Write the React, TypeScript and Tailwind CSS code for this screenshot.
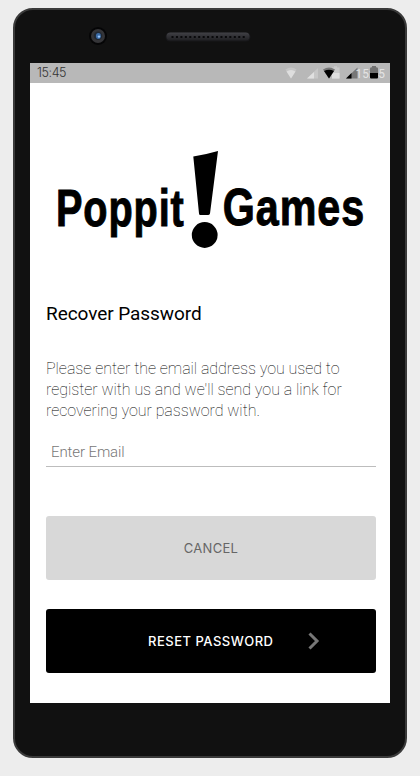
function StatusIcons() {
  return (
    <svg width="110" height="20" viewBox="0 0 110 20" className="block" aria-hidden="true">
      <path d="M5.500 6.500Q11 2.500 16.500 6.500L11 15.500Z" fill="#c7c7c7" />
      <path d="M6.500 8.500Q11 5.500 15.500 8.500L11 15.500Z" fill="#dedede" />
      <path d="M27 15.500H38V5Z" fill="#c7c7c7" />
      <path d="M27 15.500H34V9Z" fill="#e0e0e0" />
      <path d="M52 4.500h2v-1.200h3v1.200h2.500v11H52Z" fill="#c9c9c9" />
      <path d="M52 10h7.500v5.500H52Z" fill="#dedede" />
      <path d="M43 6.500Q49 2.500 55 6.500L49 15.500Z" fill="#777" />
      <path d="M44 8Q49 5.500 54 8L49 15.500Z" fill="#000" />
      <path d="M66 15.500H77.500V4.500Z" fill="#777" />
      <path d="M66 15.500H71.500V10Z" fill="#000" />
      <text x="75.500" y="15" fontFamily="Roboto, sans-serif" fontSize="13" fill="#e4e4e4" textLength="29.500" lengthAdjust="spacingAndGlyphs">15:45</text>
      <path d="M90 5.500q0-1.200 2-1.200V3h4v1.300q2 0 2 1.200V10h-8Z" fill="#707070" />
      <path d="M90 10h8v4.500q0 1-1 1h-6q-1 0-1-1Z" fill="#000" />
    </svg>
  );
}

function Logo() {
  return (
    <svg width="330" height="110" viewBox="46 145 330 110" className="block" role="img" aria-label="Poppit! Games">
      <g fontFamily="'Liberation Sans', Arial, sans-serif" fontWeight="700" fontSize="52.500" letterSpacing="1.200" fill="#000" stroke="#000" strokeWidth="1">
        <text transform="translate(56 225.500) scale(.755 1)">Poppit</text>
        <text transform="translate(222.800 224.700) scale(.786 1)">Games</text>
      </g>
      <path d="M193.300 156.500Q206 154.500 218 151L210 213.500Q209.500 215 208 215H200.500Q199 215 199 213.500Z" />
      <circle cx="204.700" cy="235" r="12.900" />
    </svg>
  );
}

function Speaker() {
  const holes = Array.from({ length: 17 }, (_, i) => i);
  return (
    <svg width="86" height="10" viewBox="0 0 86 10" className="block" aria-hidden="true">
      <defs>
        <linearGradient id="grille" x1="0" y1="0" x2="0" y2="1">
          <stop offset="0" stopColor="#414146" />
          <stop offset="0.500" stopColor="#303034" />
          <stop offset="1" stopColor="#202023" />
        </linearGradient>
      </defs>
      <rect x="0.500" y="0.500" width="85" height="9" rx="4.500" fill="#18181b" />
      <rect x="1.500" y="0.500" width="83" height="8" rx="4" fill="url(#grille)" />
      {holes.map((i) => (
        <rect key={i} x={6.500 + i * 4.450} y="4" width="2" height="2" fill="#09090b" />
      ))}
    </svg>
  );
}

function Camera() {
  return (
    <svg width="18" height="18" viewBox="0 0 18 18" className="block" aria-hidden="true">
      <circle cx="9" cy="9" r="9" fill="#050506" />
      <circle cx="9" cy="9" r="7" fill="#353538" />
      <circle cx="9" cy="8.700" r="4.300" fill="#202833" />
      <ellipse cx="9.400" cy="9" rx="2.500" ry="3" fill="#3c6ca6" />
      <circle cx="10" cy="9.600" r="1.200" fill="#9ac8ff" />
    </svg>
  );
}

export default function App() {
  return (
    <div className="h-[776px] w-[420px] overflow-hidden bg-[#ededed] pt-2 pl-[13px] font-['Roboto',sans-serif]">
      <div className="h-[750px] w-[394px] rounded-[20px] border-2 border-[#3a3a3a] bg-[#111] px-[15px]">
        <header className="flex h-[53px] pt-[17px] pl-[59px]">
          <Camera />
          <div className="mt-[5px] ml-[58px]">
            <Speaker />
          </div>
        </header>
        <main className="h-[640px] w-[360px] bg-white">
          <div className="flex h-5 items-center justify-between bg-[#b8b8b8] pl-[7px]">
            <span className="font-['Inter',sans-serif] text-[12.500px] font-light tracking-[-0.4px] text-[#333]">15:45</span>
            <StatusIcons />
          </div>
          <div className="pr-[14px] pl-4 pt-[62px]">
            <Logo />
            <h1 className="mt-[47px] text-[19px] leading-6 font-normal tracking-[-0.06px] text-black">Recover Password</h1>
            <p className="mt-8 w-[310px] text-[16px] leading-[21px] font-thin tracking-[-0.02px] text-black">
              Please enter the email address you used to register with us and we'll send you a link for recovering your password with.
            </p>
            <input
              aria-label="Email"
              placeholder="Enter Email"
              className="mt-4 block h-[30px] w-full border-b border-[#bdbdbd] px-[5px] text-[15px] font-light tracking-[-0.1px] text-[#777] outline-none placeholder:text-[#777]"
            />
            <button className="mt-[49px] flex h-16 w-full items-center justify-center rounded-[3px] bg-[#d8d8d8] pt-[2px] font-['Inter',sans-serif] text-[13px] font-normal tracking-[0.3px] text-[#666]">
              CANCEL
            </button>
            <button className="mt-[29px] flex h-16 w-full items-center rounded-[3px] bg-black pl-[102px] font-['Inter',sans-serif] text-[13px] font-medium text-white">
              <span className="w-[160px] pt-[2px] text-left tracking-[0.5px] whitespace-nowrap">RESET PASSWORD</span>
              <svg width="12" height="18" viewBox="0 0 12 18" aria-hidden="true">
                <path d="M1.500 1.500L9 9L1.500 16.500" fill="none" stroke="#777" strokeWidth="3" />
              </svg>
            </button>
          </div>
        </main>
      </div>
    </div>
  );
}
